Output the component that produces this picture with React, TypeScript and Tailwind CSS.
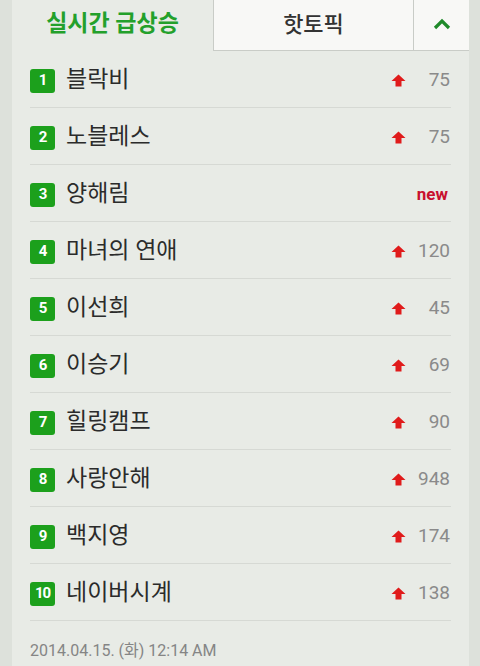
import React from "react";

const items = [
  { rank: 1, name: "블락비", change: "75" },
  { rank: 2, name: "노블레스", change: "75" },
  { rank: 3, name: "양해림", change: "new" },
  { rank: 4, name: "마녀의 연애", change: "120" },
  { rank: 5, name: "이선희", change: "45" },
  { rank: 6, name: "이승기", change: "69" },
  { rank: 7, name: "힐링캠프", change: "90" },
  { rank: 8, name: "사랑안해", change: "948" },
  { rank: 9, name: "백지영", change: "174" },
  { rank: 10, name: "네이버시계", change: "138" },
];

function UpArrow() {
  return (
    <svg width="15" height="15" viewBox="0 0 15 15" className="shrink-0">
      <path d="M7.5 1.5 L14.5 8 L10.5 8 L10.5 13.5 L4.5 13.5 L4.5 8 L0.5 8 Z" fill="#e01b1b" />
    </svg>
  );
}

export default function App() {
  return (
    <div
      className="w-[480px] h-[666px] overflow-hidden flex bg-[#dde1db]"
      style={{ fontFamily: '"Roboto", "Noto Sans CJK KR", sans-serif' }}
    >
      <div className="w-[12px] shrink-0" />
      <div className="w-[457px] shrink-0 bg-[#e8ebe6] flex flex-col">
        {/* tabs */}
        <div className="flex h-[51px] shrink-0">
          <div className="w-[201px] flex items-center justify-center text-[23px] font-bold text-[#23a02b] pb-[2px]">
            실시간 급상승
          </div>
          <div className="w-[200px] flex items-center justify-center bg-[#f8f8f6] border-l border-b border-[#c9ccc7] text-[22px] font-medium text-[#333] pb-[2px]">
            핫토픽
          </div>
          <div className="flex-1 flex items-center justify-center bg-[#f8f8f6] border-l border-b border-[#c9ccc7] pb-[2px]">
            <svg width="18" height="12" viewBox="0 0 18 12">
              <path d="M2 10 L9 3 L16 10" fill="none" stroke="#1f8a2a" strokeWidth="3.2" />
            </svg>
          </div>
        </div>

        {/* list */}
        <div className="flex flex-col px-[18px]">
          {items.map((it) => (
            <div
              key={it.rank}
              className="h-[57px] flex items-center border-b border-[#d6d9d4] pt-[3px]"
            >
              <div className="w-[25px] h-[24px] rounded-[3px] bg-[#1ca01c] text-white text-[15px] font-bold flex items-center justify-center tracking-[-1px] shrink-0">
                {it.rank}
              </div>
              <div className="ml-[11px] text-[23px] text-[#2b2b2b] flex-1 pb-[1px]">{it.name}</div>
              {it.change === "new" ? (
                <div className="text-[17px] font-bold text-[#c8102e] mr-[3px]">new</div>
              ) : (
                <div className="flex items-center">
                  <UpArrow />
                  <div className="w-[44px] text-right text-[19px] text-[#8a8a8a] mr-[1px]">
                    {it.change}
                  </div>
                </div>
              )}
            </div>
          ))}
        </div>

        <div className="px-[18px] pt-[18px] text-[16px] text-[#858585]">
          2014.04.15. (화) 12:14 AM
        </div>
      </div>
      <div className="flex-1" />
    </div>
  );
}
